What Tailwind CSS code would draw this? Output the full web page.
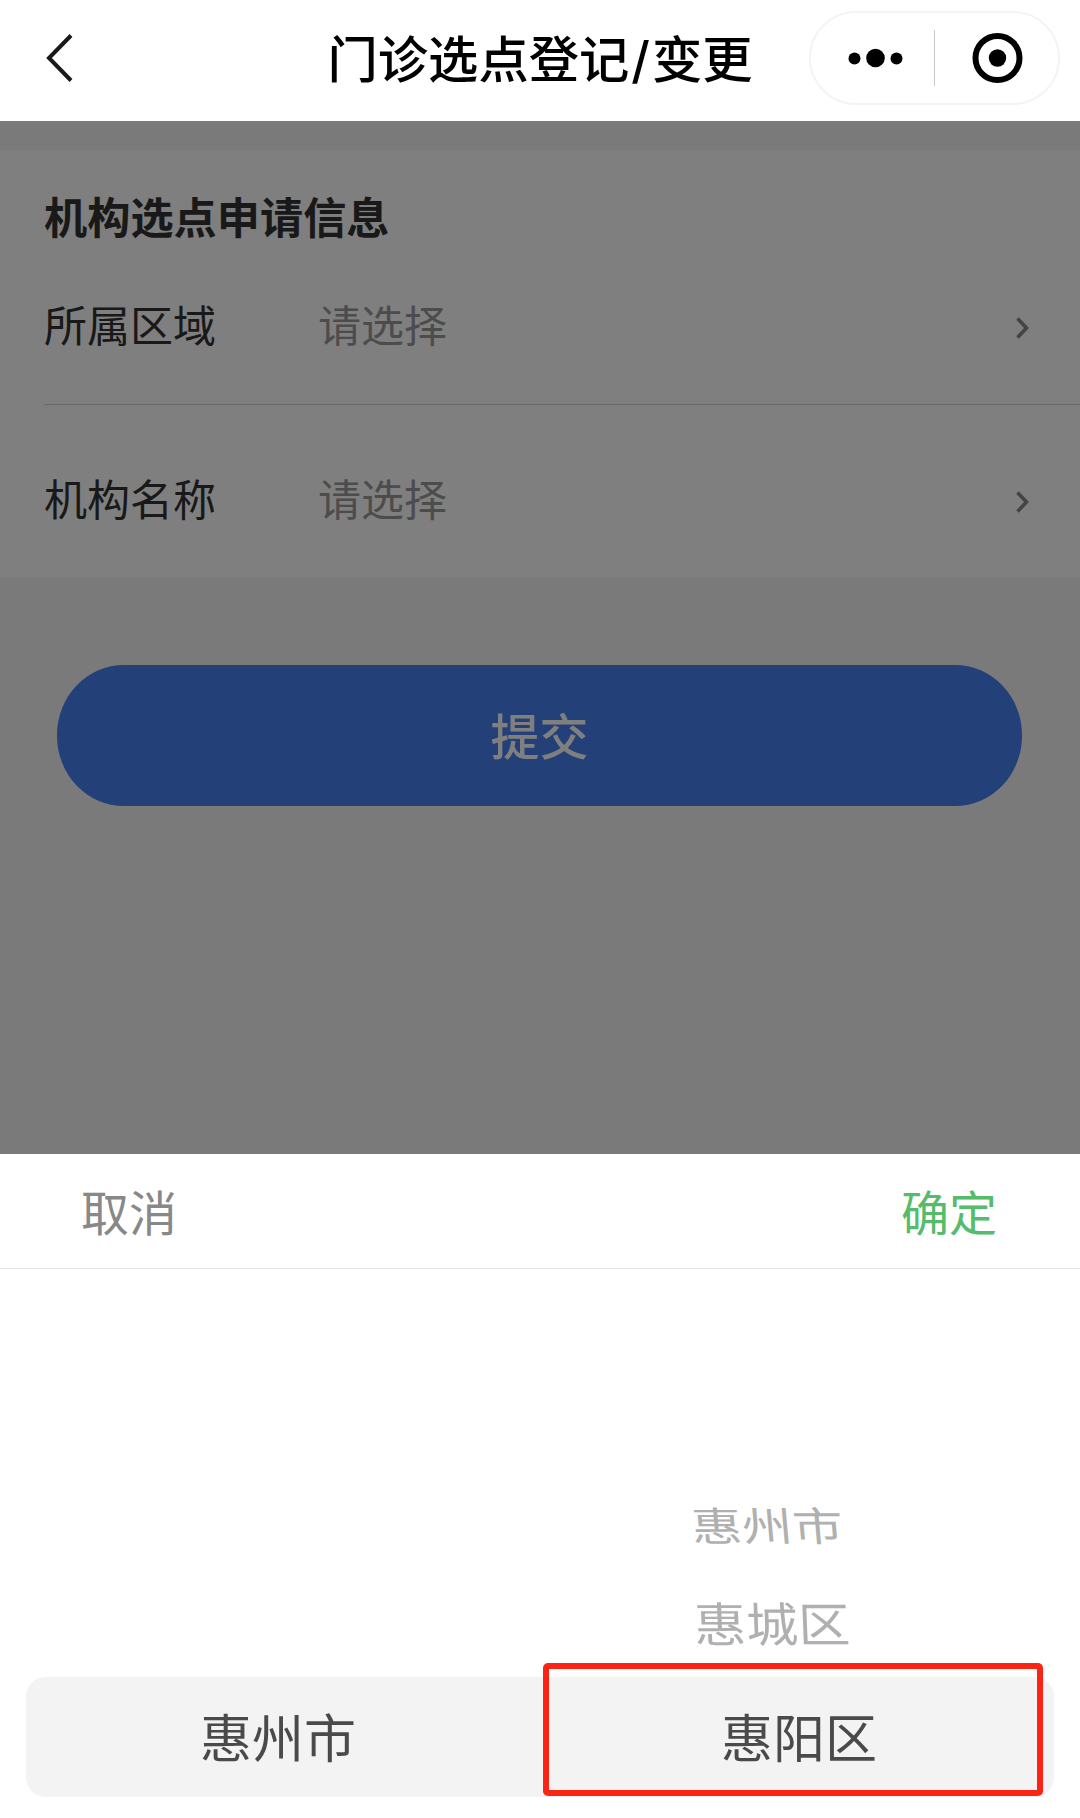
<!DOCTYPE html>
<html lang="zh-CN">
<head>
    <meta charset="UTF-8">
    <meta name="viewport" content="width=device-width, initial-scale=1.0">
    <title>门诊选点登记/变更</title>
    <script src="https://cdn.jsdelivr.net/npm/@tailwindcss/browser@4"></script>
</head>
<body class="bg-white font-['Noto_Sans_CJK_SC',sans-serif]">
    <div class="w-[1080px] h-[1818px] flex flex-col overflow-hidden">
        <!-- Navigation bar -->
        <header class="relative h-[121px] shrink-0 flex items-center justify-between pl-11 pr-5 bg-white">
            <svg class="w-8 h-14 -mt-1.5" viewBox="0 0 32 56" fill="none" stroke="#1a1a1a" stroke-width="4">
                <path d="M27 5.5 5 28l22 22.5" />
            </svg>
            <h1 class="absolute inset-x-0 top-5 text-center text-[50.3px] leading-[72px] font-medium text-black">门诊选点登记<span class="mx-0.5 font-['Inter',sans-serif]">/</span>变更</h1>
            <div class="w-[251px] h-[94px] -mt-1.5 flex items-center rounded-full border-2 border-[#f4f4f4]">
                <svg class="w-[123px] h-14" viewBox="0 0 123 56" fill="#000">
                    <circle cx="43.5" cy="28.5" r="6" />
                    <circle cx="64.5" cy="28" r="9.3" />
                    <circle cx="85.5" cy="28.5" r="6" />
                </svg>
                <div class="w-px h-14 bg-[#c9c9c9]"></div>
                <svg class="w-[123px] h-14" viewBox="0 0 123 56">
                    <circle cx="62.5" cy="28" r="22" fill="none" stroke="#000" stroke-width="6" />
                    <circle cx="62.5" cy="28" r="8.7" fill="#000" />
                </svg>
            </div>
        </header>

        <!-- Form, dimmed by the mask -->
        <main class="relative h-[1033px] shrink-0 pt-[29px] bg-[#f4f4f4]">
            <section class="h-[427px] pt-[33px] pl-11 bg-white">
                <h2 class="h-16 text-[43.2px] leading-[64px] font-bold text-[#333]">机构选点申请信息</h2>
                <div class="h-[158px] flex pt-11 pr-[51px] text-[43px] leading-[64px] border-b border-[#cfcfcf]">
                    <span class="w-[274px] text-[#333]">所属区域</span>
                    <span class="flex-1 text-[#999]">请选择</span>
                    <svg class="w-4 h-6 mt-[25px]" viewBox="0 0 16 24" fill="none" stroke="#888" stroke-width="3.6">
                        <path d="m4.5 2.5 9 9.5-9 9.5" />
                    </svg>
                </div>
                <div class="flex pt-[60px] pr-[51px] text-[43px] leading-[64px]">
                    <span class="w-[274px] text-[#333]">机构名称</span>
                    <span class="flex-1 text-[#999]">请选择</span>
                    <svg class="w-4 h-6 mt-[25px]" viewBox="0 0 16 24" fill="none" stroke="#888" stroke-width="3.6">
                        <path d="m4.5 2.5 9 9.5-9 9.5" />
                    </svg>
                </div>
            </section>
            <button class="block w-[965px] h-[141px] mt-[88px] ml-[57px] pb-1 rounded-[67px/70px] bg-[#4680f2] text-[49px] leading-[72px] font-medium text-white">提交</button>
            <div class="absolute inset-0 bg-black/50"></div>
        </main>

        <!-- Picker sheet -->
        <section class="flex-1 bg-white">
            <div class="h-[115px] flex justify-between items-center px-[81px] pb-[3px] border-b border-[#e5e5e5] text-[48px] leading-[72px]">
                <span class="text-[#888]">取消</span>
                <span class="mr-0.5 text-[#57bb6c]">确定</span>
            </div>
            <div class="pt-[217px] text-[52px] leading-[76px] text-[#b0b0b0]">
                <div class="h-[98px] pl-[689px]">
                    <span class="inline-block scale-y-[0.77] scale-x-[0.97] skew-x-4">惠州市</span>
                </div>
                <div class="h-[93px] pl-[694px]">
                    <span class="inline-block scale-y-[0.91] skew-x-2">惠城区</span>
                </div>
            </div>
            <div class="relative h-[120px] mx-[26px] pb-[3px] flex items-center rounded-[20px] bg-[#f3f3f3] text-[52px] leading-[76px] text-[#4a4a4a]">
                <span class="w-[521px] pl-[174px]">惠州市</span>
                <span class="pl-[174px]">惠阳区</span>
                <div class="absolute left-[517px] -top-[14px] w-[500px] h-[133px] border-[6px] border-[#fb2314] rounded-[5px]"></div>
            </div>
        </section>
    </div>
</body>
</html>
